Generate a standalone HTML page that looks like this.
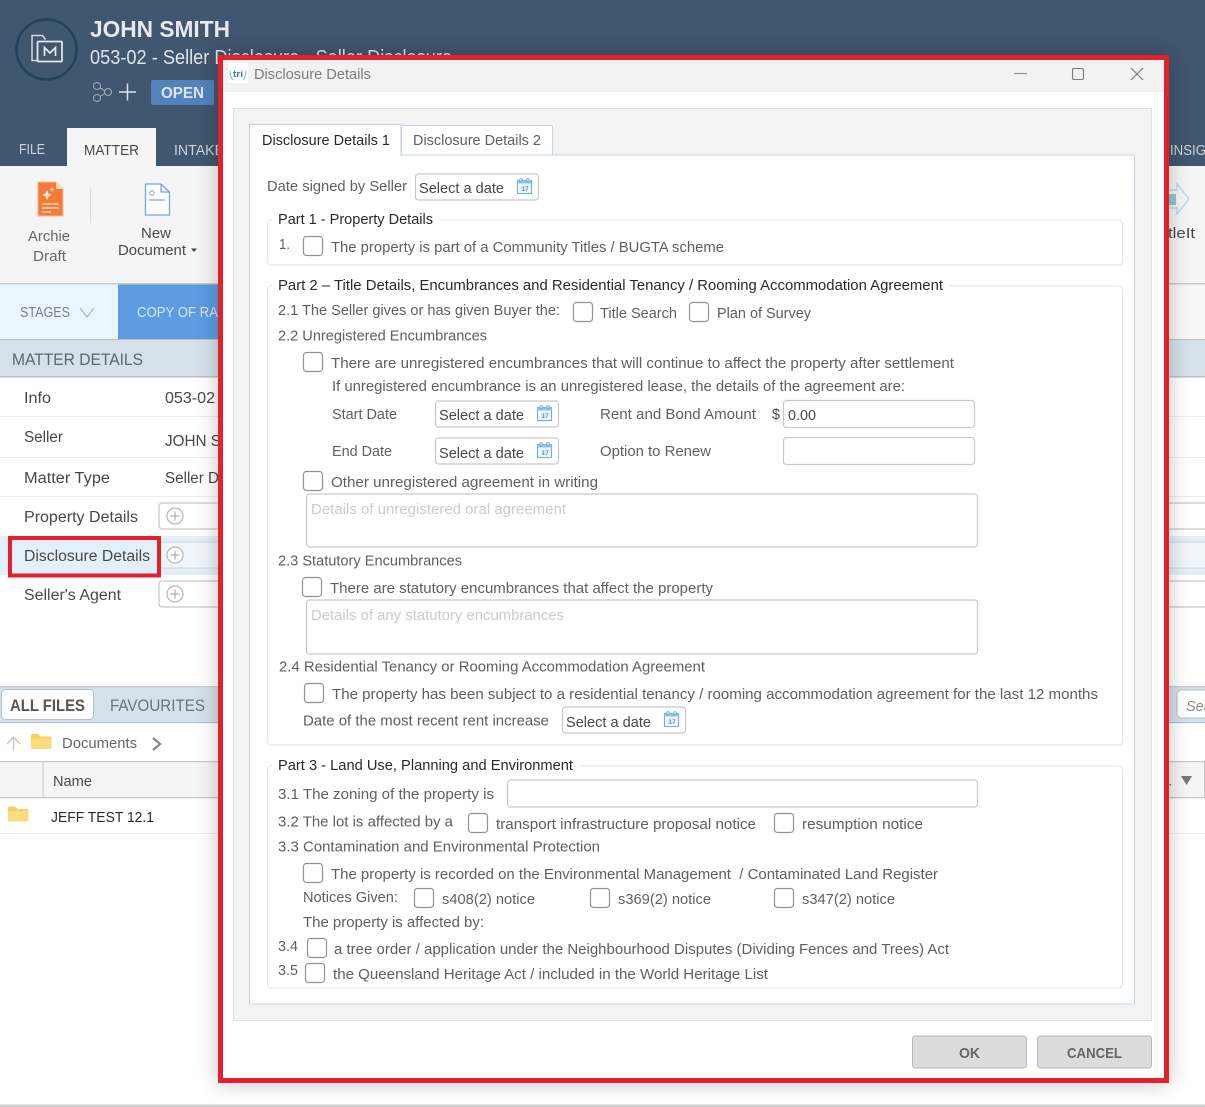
<!DOCTYPE html>
<html><head><meta charset="utf-8"><title>Disclosure Details</title>
<style>
html,body{margin:0;padding:0;background:#fff;width:1205px;height:1107px;overflow:hidden}
svg{display:block}
text{font-family:"Liberation Sans",sans-serif;font-size:14.5px;fill:#5f5f5f;white-space:pre}
.d{fill:#2a2a2a}
.m{fill:#484848}
.g{fill:#c8cccf}
.box{fill:#fff;stroke:#c4c9ce;stroke-width:1.2}
.cb{fill:#fff;stroke:#929292;stroke-width:1.2}
.fs{fill:#fff;stroke:#e3e7ea;stroke-width:1.2}
</style></head><body>
<svg width="1205" height="1107" viewBox="0 0 1205 1107" xmlns="http://www.w3.org/2000/svg">
<defs>
<filter id="sh" x="-10%" y="-10%" width="120%" height="120%"><feGaussianBlur stdDeviation="11"/></filter>
<g id="cal"><rect x="0.5" y="2.5" width="14" height="13" fill="#f2f8fd" stroke="#6fb0dc" stroke-width="1.1"/><rect x="0.5" y="2.5" width="14" height="3" fill="#8cc3e6"/><circle cx="4" cy="2" r="1.3" fill="#fff" stroke="#5ea5d6" stroke-width=".8"/><circle cx="11" cy="2" r="1.3" fill="#fff" stroke="#5ea5d6" stroke-width=".8"/><rect x="4" y="8" width="7" height="5" fill="#d6e8f5"/><text x="4.500" y="13" style="font-size:6.500px;fill:#3d7fae">17</text></g>
<g id="plus"><circle cx="0" cy="0" r="8" fill="#fff" stroke="#b5b5b5" stroke-width="1.200"/><path d="M-4.500 0H4.500M0-4.500V4.500" stroke="#b0b0b0" stroke-width="1.200"/></g>
<g id="folder"><path d="M0 2a1.500 1.500 0 0 1 1.500-1.500H7L9.500 3H19a1.500 1.500 0 0 1 1.500 1.500V14a1.500 1.500 0 0 1-1.500 1.500H1.500A1.500 1.500 0 0 1 0 14Z" fill="#f7cf5e"/><path d="M0 5H20.500V14a1.500 1.500 0 0 1-1.500 1.500H1.500A1.500 1.500 0 0 1 0 14Z" fill="#fbdc7d"/></g>
</defs>

<!-- app background -->
<rect width="1205" height="1107" fill="#fff"/>
<rect width="1205" height="167" fill="#41566f"/>
<rect y="166" width="1205" height="117" fill="#f5f5f5"/>
<rect y="283" width="1205" height="1.500" fill="#c9c9c9"/>
<rect y="284.500" width="1205" height="55" fill="#f7f7f7"/>
<rect y="284.500" width="118" height="55" fill="#ebf5fd"/>
<rect x="118" y="284.500" width="200" height="55" fill="#5c9ce2"/>
<rect y="339" width="1205" height="38" fill="#d6e0e9"/>
<rect y="339" width="1205" height="1" fill="#b9c1c8"/>
<rect y="376" width="1205" height="1.500" fill="#b9c1c8"/>

<!-- header -->
<circle cx="46.500" cy="49.500" r="30" fill="none" stroke="#23425f" stroke-width="2.600"/>
<path d="M37 60.500H32V35.500H42.500L45.500 39.500" fill="none" stroke="#d3dae0" stroke-width="1.500"/>
<rect x="37.500" y="41.500" width="24.500" height="20" rx="1" fill="none" stroke="#e2e7eb" stroke-width="1.800"/>
<path d="M44.500 56V47.500L50 53L55.500 47.500V56" fill="none" stroke="#e6ebef" stroke-width="1.700"/>
<text x="90" y="37" textLength="140" lengthAdjust="spacingAndGlyphs" style="font-size:23px;font-weight:bold;fill:#e5e9ed">JOHN SMITH</text>
<text x="90" y="64" textLength="362" lengthAdjust="spacingAndGlyphs" style="font-size:20px;fill:#dfe4e9">053-02 - Seller Disclosure - Seller Disclosure</text>
<g fill="none" stroke="#a2afbb" stroke-width="1"><circle cx="97" cy="86" r="3.500"/><circle cx="97" cy="98" r="3.500"/><circle cx="108" cy="92" r="3.500"/><path d="M100 88L104.800 90.500M100 96.500L104.800 93.500"/></g>
<path d="M119 92H136M127.500 83.500V100.500" stroke="#dfe4e9" stroke-width="1.500"/>
<rect x="151" y="80" width="63" height="25" rx="2" fill="#5482bd"/>
<text x="161" y="98" textLength="43" lengthAdjust="spacingAndGlyphs" style="font-size:16px;font-weight:bold;fill:#dbe6f2">OPEN</text>
<text x="19" y="154" textLength="26" lengthAdjust="spacingAndGlyphs" style="fill:#ccd3da">FILE</text>
<rect x="67" y="128" width="89" height="39" fill="#f5f5f5"/>
<text x="84" y="155" textLength="55" lengthAdjust="spacingAndGlyphs" class="m">MATTER</text>
<text x="174" y="155" textLength="50" lengthAdjust="spacingAndGlyphs" style="fill:#ccd3da">INTAKE</text>
<text x="1170" y="155" textLength="36" lengthAdjust="spacingAndGlyphs" style="fill:#ccd3da">INSIG</text>

<!-- ribbon -->
<path d="M38 182H56L63 189V216H38Z" fill="#f47b36" stroke="#f9b998" stroke-width="1"/>
<path d="M56 182V189H63Z" fill="#fbd6bf"/>
<path d="M47 190l1.500 3.500 3.500 1.500-3.500 1.500-1.500 3.500-1.500-3.500-3.500-1.500 3.500-1.500Z" fill="#fde7da"/>
<path d="M52 187l.8 1.700 1.700.8-1.700.8-.8 1.700-.8-1.700-1.700-.8 1.700-.8Z" fill="#fde7da"/>
<path d="M42 204H59M42 208H59M42 212H51" stroke="#fde2d2" stroke-width="1.300"/>
<rect x="90" y="188" width="1.200" height="35" fill="#dcdcdc"/>
<text x="28" y="241" textLength="42" lengthAdjust="spacingAndGlyphs" style="fill:#666">Archie</text>
<text x="33" y="261" textLength="33" lengthAdjust="spacingAndGlyphs" style="fill:#666">Draft</text>
<path d="M145.500 184H161L169.500 192V215H145.500Z M161 184V192H169.500" fill="#fff" stroke="#6ea6e4" stroke-width="1.300"/>
<circle cx="152" cy="193" r="2.200" fill="none" stroke="#6ea6e4" stroke-width="1"/>
<path d="M149 200H165" stroke="#6ea6e4" stroke-width="1.200"/>
<text x="141" y="238" textLength="30" lengthAdjust="spacingAndGlyphs" class="m">New</text>
<text x="118" y="255" textLength="68" lengthAdjust="spacingAndGlyphs" class="m">Document</text>
<path d="M191 248.500H197L194 252Z" fill="#444"/>
<path d="M1168 190H1177V184L1189 199L1177 214V208H1168" fill="none" stroke="#a9d8e2" stroke-width="1.200"/>
<rect x="1168" y="194" width="8" height="11" fill="#8cc8d8"/>
<text x="1168" y="238" textLength="27" lengthAdjust="spacingAndGlyphs" class="m">tleIt</text>

<!-- stages -->
<text x="20" y="317" textLength="50" lengthAdjust="spacingAndGlyphs" style="fill:#7a8087">STAGES</text>
<path d="M80 308L87 317L94 308" fill="none" stroke="#a9b5c0" stroke-width="1.200"/>
<text x="137" y="317" textLength="81" lengthAdjust="spacingAndGlyphs" style="fill:#d5e6f8">COPY OF RA</text>
<text x="12" y="365" textLength="131" lengthAdjust="spacingAndGlyphs" style="font-size:17px;fill:#5c6670">MATTER DETAILS</text>

<!-- details rows -->
<rect y="416" width="1205" height="1" fill="#ececec"/><rect y="457" width="1205" height="1" fill="#ececec"/><rect y="496" width="1205" height="1" fill="#ececec"/>
<rect y="536" width="1205" height="39" fill="#e3eff9"/>
<text x="24" y="403" textLength="27" lengthAdjust="spacingAndGlyphs" class="m" style="font-size:15.500px">Info</text>
<text x="165" y="403" textLength="50" lengthAdjust="spacingAndGlyphs" class="m" style="font-size:15.500px">053-02</text>
<text x="24" y="442" textLength="39" lengthAdjust="spacingAndGlyphs" class="m" style="font-size:15.500px">Seller</text>
<text x="165" y="446" textLength="56" lengthAdjust="spacingAndGlyphs" class="m" style="font-size:15.500px">JOHN S</text>
<text x="24" y="483" textLength="86" lengthAdjust="spacingAndGlyphs" class="m" style="font-size:15.500px">Matter Type</text>
<text x="165" y="483" textLength="54" lengthAdjust="spacingAndGlyphs" class="m" style="font-size:15.500px">Seller D</text>
<text x="24" y="522" textLength="114" lengthAdjust="spacingAndGlyphs" class="m" style="font-size:15.500px">Property Details</text>
<text x="24" y="561" textLength="126" lengthAdjust="spacingAndGlyphs" class="m" style="font-size:15.500px">Disclosure Details</text>
<text x="24" y="600" textLength="97" lengthAdjust="spacingAndGlyphs" class="m" style="font-size:15.500px">Seller's Agent</text>
<rect x="159" y="503" width="1060" height="26" rx="3" class="box"/>
<rect x="159" y="542" width="1060" height="26" rx="3" fill="#eef5fb" stroke="#cfd6dc"/>
<rect x="159" y="581" width="1060" height="26" rx="3" class="box"/>
<use href="#plus" x="175" y="516"/><use href="#plus" x="175" y="555"/><use href="#plus" x="175" y="594"/>
<rect x="10" y="538" width="149" height="37.500" fill="none" stroke="#e3202b" stroke-width="4"/>

<!-- files -->
<rect y="686" width="1205" height="37" fill="#d6e0e9"/>
<rect y="686" width="1205" height="1.200" fill="#c5ccd3"/><rect y="722" width="1205" height="1.200" fill="#b9c1c8"/>
<rect x="1.500" y="689.500" width="92" height="30" rx="4" fill="#fff" stroke="#b8c0c7"/>
<text x="10" y="711" textLength="75" lengthAdjust="spacingAndGlyphs" style="font-size:17px;font-weight:bold;fill:#555">ALL FILES</text>
<text x="110" y="711" textLength="95" lengthAdjust="spacingAndGlyphs" style="font-size:17px;fill:#6a747d">FAVOURITES</text>
<rect x="1177" y="690" width="50" height="28" rx="4" fill="#fff" stroke="#b8c0c7"/>
<text x="1186" y="711" textLength="46" lengthAdjust="spacingAndGlyphs" style="font-style:italic;font-size:15px;fill:#8a8a8a">Search</text>
<path d="M7 744L13.500 737L20 744M13.500 737V750" fill="none" stroke="#c5c5c5" stroke-width="1.300"/>
<use href="#folder" x="31" y="733.500"/>
<text x="62" y="748" textLength="75" lengthAdjust="spacingAndGlyphs" style="fill:#666">Documents</text>
<path d="M153 738L160 744L153 750" fill="none" stroke="#8b8b8b" stroke-width="2.400"/>
<rect y="761" width="1205" height="38" fill="#f5f5f5"/>
<rect y="761" width="1205" height="1.200" fill="#c9c9c9"/><rect y="797" width="1205" height="1.200" fill="#c9c9c9"/>
<rect x="42.500" y="762" width="1" height="35" fill="#c9c9c9"/>
<rect x="1204" y="762" width="1" height="35" fill="#c9c9c9"/>
<text x="53" y="786" textLength="39" lengthAdjust="spacingAndGlyphs" class="m">Name</text>
<rect x="1169.500" y="784" width="1.500" height="1.500" fill="#666"/>
<path d="M1181 776H1192L1186.500 785Z" fill="#777"/>
<use href="#folder" x="8" y="806"/>
<text x="51" y="822" textLength="103" lengthAdjust="spacingAndGlyphs" class="d">JEFF TEST 12.1</text>
<rect y="833" width="1205" height="1" fill="#f0f0f0"/>
<rect y="1104.500" width="1205" height="2.500" fill="#d2d2d2"/>

<!-- dialog -->
<rect x="218" y="55" width="951" height="1028" fill="#000" opacity=".24" filter="url(#sh)"/>
<rect x="220.500" y="57.500" width="946" height="1023" fill="#fff" stroke="#e3202b" stroke-width="5"/>
<rect x="223" y="60" width="941" height="32" fill="#f2f2f2"/>
<rect x="228" y="63" width="20" height="20" fill="#fff"/>
<path d="M230 71q0 6 3 9M246 71q0 6-3 9" fill="none" stroke="#7cc0dc" stroke-width="1.100"/>
<text x="233" y="77" textLength="10" lengthAdjust="spacingAndGlyphs" style="font-size:9px;font-weight:bold;fill:#3c79ad">tri</text>
<text x="254" y="79" textLength="117" lengthAdjust="spacingAndGlyphs" style="fill:#7d7d7d">Disclosure Details</text>
<path d="M1014 73.500H1027" stroke="#8f8f8f" stroke-width="1.100"/>
<rect x="1072.500" y="68.500" width="11" height="11" rx="1.500" fill="none" stroke="#777" stroke-width="1.100"/>
<path d="M1131 68L1143 80M1143 68L1131 80" stroke="#777" stroke-width="1.100"/>

<rect x="233.500" y="108.500" width="918" height="912" fill="#f3f3f3" stroke="#dfe2e5"/>
<rect x="249.500" y="155" width="885" height="849" fill="#fff" stroke="#c6d3e3"/>
<rect x="249.500" y="124.500" width="151.500" height="31" fill="#fff" stroke="#c6d3e3"/>
<rect x="250.500" y="150" width="150" height="8" fill="#fff"/>
<rect x="401.500" y="125.500" width="151" height="29.500" fill="#fff" stroke="#c6d3e3"/>
<text x="262" y="145" textLength="128" lengthAdjust="spacingAndGlyphs" class="d">Disclosure Details 1</text>
<text x="413" y="145" textLength="128" lengthAdjust="spacingAndGlyphs">Disclosure Details 2</text>

<text x="267" y="191" textLength="140" lengthAdjust="spacingAndGlyphs">Date signed by Seller</text>
<rect x="415.500" y="174" width="123" height="26" rx="3" class="box"/>
<text x="419" y="193" textLength="85" lengthAdjust="spacingAndGlyphs" class="m">Select a date</text>
<use href="#cal" x="517" y="178"/>

<!-- part 1 -->
<rect x="267.500" y="220" width="855" height="45" rx="4" class="fs"/>
<rect x="272" y="212" width="168" height="16" fill="#fff"/>
<text x="278" y="224" textLength="155" lengthAdjust="spacingAndGlyphs" class="d">Part 1 - Property Details</text>
<text x="279" y="249" textLength="11" lengthAdjust="spacingAndGlyphs">1.</text>
<rect x="303.500" y="236.500" width="19" height="19" rx="3" class="cb"/>
<text x="331" y="252" textLength="393" lengthAdjust="spacingAndGlyphs">The property is part of a Community Titles / BUGTA scheme</text>

<!-- part 2 -->
<rect x="267.500" y="286" width="855" height="459" rx="4" class="fs"/>
<rect x="272" y="278" width="678" height="16" fill="#fff"/>
<text x="278" y="290" textLength="665" lengthAdjust="spacingAndGlyphs" class="d">Part 2 – Title Details, Encumbrances and Residential Tenancy / Rooming Accommodation Agreement</text>
<text x="278" y="315" textLength="282" lengthAdjust="spacingAndGlyphs">2.1 The Seller gives or has given Buyer the:</text>
<rect x="573.500" y="302.500" width="19" height="19" rx="3" class="cb"/>
<text x="600" y="318" textLength="77" lengthAdjust="spacingAndGlyphs">Title Search</text>
<rect x="689.500" y="302.500" width="19" height="19" rx="3" class="cb"/>
<text x="717" y="318" textLength="94" lengthAdjust="spacingAndGlyphs">Plan of Survey</text>
<text x="278" y="340.500" textLength="209" lengthAdjust="spacingAndGlyphs">2.2 Unregistered Encumbrances</text>
<rect x="303.500" y="352.500" width="19" height="19" rx="3" class="cb"/>
<text x="331" y="368" textLength="623" lengthAdjust="spacingAndGlyphs">There are unregistered encumbrances that will continue to affect the property after settlement</text>
<text x="332" y="391" textLength="573" lengthAdjust="spacingAndGlyphs">If unregistered encumbrance is an unregistered lease, the details of the agreement are:</text>
<text x="332" y="419" textLength="65" lengthAdjust="spacingAndGlyphs">Start Date</text>
<rect x="435.500" y="401" width="123" height="26" rx="3" class="box"/>
<text x="439" y="420" textLength="85" lengthAdjust="spacingAndGlyphs" class="m">Select a date</text>
<use href="#cal" x="537" y="405"/>
<text x="600" y="419" textLength="156" lengthAdjust="spacingAndGlyphs">Rent and Bond Amount</text>
<text x="772" y="419" textLength="8" lengthAdjust="spacingAndGlyphs" class="m">$</text>
<rect x="783.500" y="400.500" width="191" height="27" rx="3" class="box"/>
<text x="788" y="420" textLength="28" lengthAdjust="spacingAndGlyphs" class="m">0.00</text>
<text x="332" y="456" textLength="60" lengthAdjust="spacingAndGlyphs">End Date</text>
<rect x="435.500" y="438" width="123" height="26" rx="3" class="box"/>
<text x="439" y="458" textLength="85" lengthAdjust="spacingAndGlyphs" class="m">Select a date</text>
<use href="#cal" x="537" y="442"/>
<text x="600" y="456" textLength="111" lengthAdjust="spacingAndGlyphs">Option to Renew</text>
<rect x="783.500" y="437.500" width="191" height="27" rx="3" class="box"/>
<rect x="303.500" y="471.500" width="19" height="19" rx="3" class="cb"/>
<text x="331" y="487" textLength="267" lengthAdjust="spacingAndGlyphs">Other unregistered agreement in writing</text>
<rect x="306.500" y="494" width="671" height="53" rx="3" class="box"/>
<text x="311" y="514" textLength="255" lengthAdjust="spacingAndGlyphs" class="g">Details of unregistered oral agreement</text>
<text x="278" y="565.500" textLength="184" lengthAdjust="spacingAndGlyphs">2.3 Statutory Encumbrances</text>
<rect x="302.500" y="577.500" width="19" height="19" rx="3" class="cb"/>
<text x="330" y="593" textLength="383" lengthAdjust="spacingAndGlyphs">There are statutory encumbrances that affect the property</text>
<rect x="306.500" y="600" width="671" height="54" rx="3" class="box"/>
<text x="311" y="620" textLength="253" lengthAdjust="spacingAndGlyphs" class="g">Details of any statutory encumbrances</text>
<text x="279" y="671.500" textLength="426" lengthAdjust="spacingAndGlyphs">2.4 Residential Tenancy or Rooming Accommodation Agreement</text>
<rect x="304.500" y="683.500" width="19" height="19" rx="3" class="cb"/>
<text x="332" y="699" textLength="766" lengthAdjust="spacingAndGlyphs">The property has been subject to a residential tenancy / rooming accommodation agreement for the last 12 months</text>
<text x="303" y="725.500" textLength="246" lengthAdjust="spacingAndGlyphs">Date of the most recent rent increase</text>
<rect x="562.500" y="707" width="123" height="26" rx="3" class="box"/>
<text x="566" y="727" textLength="85" lengthAdjust="spacingAndGlyphs" class="m">Select a date</text>
<use href="#cal" x="664" y="711"/>

<!-- part 3 -->
<rect x="267.500" y="766" width="855" height="222" rx="4" class="fs"/>
<rect x="272" y="758" width="308" height="16" fill="#fff"/>
<text x="278" y="770" textLength="295" lengthAdjust="spacingAndGlyphs" class="d">Part 3 - Land Use, Planning and Environment</text>
<text x="278" y="799" textLength="216" lengthAdjust="spacingAndGlyphs">3.1 The zoning of the property is</text>
<rect x="507.500" y="780" width="470" height="27" rx="3" class="box"/>
<text x="278" y="826.500" textLength="175" lengthAdjust="spacingAndGlyphs">3.2 The lot is affected by a</text>
<rect x="468.500" y="813.500" width="19" height="19" rx="3" class="cb"/>
<text x="496" y="829" textLength="260" lengthAdjust="spacingAndGlyphs">transport infrastructure proposal notice</text>
<rect x="774.500" y="813.500" width="19" height="19" rx="3" class="cb"/>
<text x="802" y="829" textLength="121" lengthAdjust="spacingAndGlyphs">resumption notice</text>
<text x="278" y="851.500" textLength="322" lengthAdjust="spacingAndGlyphs">3.3 Contamination and Environmental Protection</text>
<rect x="303.500" y="863.500" width="19" height="19" rx="3" class="cb"/>
<text x="331" y="879" textLength="607" lengthAdjust="spacingAndGlyphs">The property is recorded on the Environmental Management  / Contaminated Land Register</text>
<text x="303" y="902" textLength="95" lengthAdjust="spacingAndGlyphs">Notices Given:</text>
<rect x="414.500" y="888.500" width="19" height="19" rx="3" class="cb"/>
<text x="442" y="904" textLength="93" lengthAdjust="spacingAndGlyphs">s408(2) notice</text>
<rect x="590.500" y="888.500" width="19" height="19" rx="3" class="cb"/>
<text x="618" y="904" textLength="93" lengthAdjust="spacingAndGlyphs">s369(2) notice</text>
<rect x="774.500" y="888.500" width="19" height="19" rx="3" class="cb"/>
<text x="802" y="904" textLength="93" lengthAdjust="spacingAndGlyphs">s347(2) notice</text>
<text x="303" y="927" textLength="181" lengthAdjust="spacingAndGlyphs">The property is affected by:</text>
<text x="278" y="951" textLength="20" lengthAdjust="spacingAndGlyphs">3.4</text>
<rect x="307.500" y="938.500" width="19" height="19" rx="3" class="cb"/>
<text x="334" y="954" textLength="615" lengthAdjust="spacingAndGlyphs">a tree order / application under the Neighbourhood Disputes (Dividing Fences and Trees) Act</text>
<text x="278" y="975" textLength="20" lengthAdjust="spacingAndGlyphs">3.5</text>
<rect x="305.500" y="963.500" width="19" height="19" rx="3" class="cb"/>
<text x="333" y="979" textLength="435" lengthAdjust="spacingAndGlyphs">the Queensland Heritage Act / included in the World Heritage List</text>

<!-- buttons -->
<rect x="912.500" y="1036" width="114" height="32" rx="3" fill="#dcdcdc" stroke="#b9b9b9"/>
<text x="959" y="1058" textLength="21" lengthAdjust="spacingAndGlyphs" style="font-size:15px;font-weight:bold;fill:#666">OK</text>
<rect x="1037.500" y="1036" width="114" height="32" rx="3" fill="#dcdcdc" stroke="#b9b9b9"/>
<text x="1067" y="1058" textLength="55" lengthAdjust="spacingAndGlyphs" style="font-size:15px;font-weight:bold;fill:#666">CANCEL</text>
</svg>
</body></html>
